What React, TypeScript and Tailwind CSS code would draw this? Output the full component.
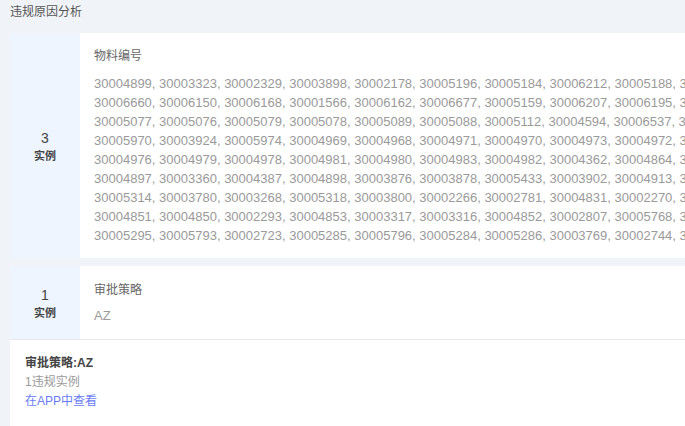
const lines: string[][] = [
  ["30004899", "30003323", "30002329", "30003898", "30002178", "30005196", "30005184", "30006212", "30005188", "30005190"],
  ["30006660", "30006150", "30006168", "30001566", "30006162", "30006677", "30005159", "30006207", "30006195", "30006196"],
  ["30005077", "30005076", "30005079", "30005078", "30005089", "30005088", "30005112", "30004594", "30006537", "30006538"],
  ["30005970", "30003924", "30005974", "30004969", "30004968", "30004971", "30004970", "30004973", "30004972", "30004975"],
  ["30004976", "30004979", "30004978", "30004981", "30004980", "30004983", "30004982", "30004362", "30004864", "30004865"],
  ["30004897", "30003360", "30004387", "30004898", "30003876", "30003878", "30005433", "30003902", "30004913", "30004914"],
  ["30005314", "30003780", "30003268", "30005318", "30003800", "30002266", "30002781", "30004831", "30002270", "30002271"],
  ["30004851", "30004850", "30002293", "30004853", "30003317", "30003316", "30004852", "30002807", "30005768", "30005769"],
  ["30005295", "30005793", "30002723", "30005285", "30005796", "30005284", "30005286", "30003769", "30002744", "30002745"],
]

const cjk = "font-['Liberation_Sans','Noto_Sans_CJK_SC',sans-serif]"

const CountCell = ({ count }: { count: number }) => (
  <div className="w-[70px] shrink-0 bg-[#eef5fe] flex flex-col items-center justify-center">
    <div className="text-[14px] leading-[20px] text-[#444]">{count}</div>
    <div className="text-[11px] leading-[16px] font-bold text-[#444]">实例</div>
  </div>
)

export default function App() {
  return (
    <div className={`w-[685px] h-[426px] overflow-hidden bg-[#f0f3f7] ${cjk}`}>
      <div className="h-[33px] pl-[10px] pt-[4px] text-[12px] leading-[17px] text-[#555]">违规原因分析</div>
      <div className="ml-[10px] w-[1000px] flex flex-col">
        <div className="flex bg-white h-[225px]">
          <CountCell count={3} />
          <div className="pl-[14px] pt-[13px]">
            <div className="text-[12px] leading-[20px] text-[#666]">物料编号</div>
            <div className="mt-[8px] text-[13px] leading-[19px] text-[#9a9a9a]">
              {lines.map((l, i) => (
                <div key={i} className="whitespace-nowrap">
                  {l.join(", ")},
                </div>
              ))}
            </div>
          </div>
        </div>
        <div className="h-[8px]" />
        <div className="flex bg-white h-[74px] border-b border-[#e6e8eb]">
          <CountCell count={1} />
          <div className="pl-[14px] pt-[14px]">
            <div className="text-[12px] leading-[20px] text-[#666]">审批策略</div>
            <div className="mt-[6px] text-[13px] leading-[19px] text-[#9a9a9a]">AZ</div>
          </div>
        </div>
        <div className="bg-white h-[100px] pl-[15px] pt-[14px] text-[12px] leading-[19px]">
          <div className="font-bold text-[#444]">审批策略:AZ</div>
          <div className="text-[#999]">1违规实例</div>
          <div className="text-[#6a7cf5]">在APP中查看</div>
        </div>
      </div>
    </div>
  )
}
